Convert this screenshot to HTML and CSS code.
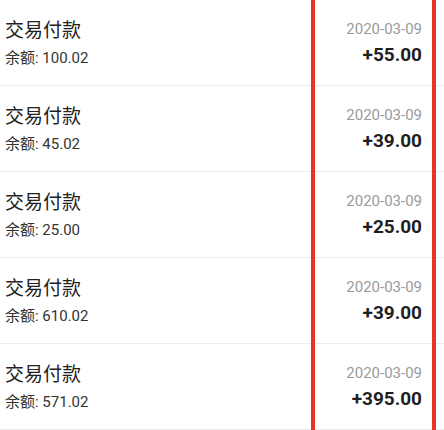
FILE: index.html
```html
<!DOCTYPE html>
<html lang="zh-CN">
<head>
<meta charset="utf-8">
<link rel="stylesheet" href="styles.css">
</head>
<body>
<div class="page">
  <ul class="list">
    <li class="row">
      <div class="info"><div class="title">交易付款</div><div class="balance">余额: 100.02</div></div>
      <div class="meta"><div class="date">2020-03-09</div><div class="amount">+55.00</div></div>
    </li>
    <li class="row">
      <div class="info"><div class="title">交易付款</div><div class="balance">余额: 45.02</div></div>
      <div class="meta"><div class="date">2020-03-09</div><div class="amount">+39.00</div></div>
    </li>
    <li class="row">
      <div class="info"><div class="title">交易付款</div><div class="balance">余额: 25.00</div></div>
      <div class="meta"><div class="date">2020-03-09</div><div class="amount">+25.00</div></div>
    </li>
    <li class="row">
      <div class="info"><div class="title">交易付款</div><div class="balance">余额: 610.02</div></div>
      <div class="meta"><div class="date">2020-03-09</div><div class="amount">+39.00</div></div>
    </li>
    <li class="row">
      <div class="info"><div class="title">交易付款</div><div class="balance">余额: 571.02</div></div>
      <div class="meta"><div class="date">2020-03-09</div><div class="amount">+395.00</div></div>
    </li>
  </ul>
  <div class="highlight"></div>
</div>
</body>
</html>
```
FILE: styles.css
```css
html, body {
  margin: 0;
  padding: 0;
  background: #ffffff;
}
body {
  font-family: "Roboto", "Noto Sans CJK SC", sans-serif;
  color: #222222;
}
.page {
  position: relative;
  width: 444px;
  height: 430px;
  overflow: hidden;
}
.list {
  list-style: none;
  margin: 0;
  padding: 0;
}
.row {
  display: flex;
  align-items: center;
  justify-content: space-between;
  height: 85px;
  padding: 0 22px 0 5px;
  border-bottom: 1px solid #ececec;
}
.info {
  display: flex;
  flex-direction: column;
  gap: 6px;
}
.title {
  font-size: 19px;
  line-height: 24px;
  color: #222222;
}
.balance {
  font-size: 15px;
  line-height: 18px;
  color: #333333;
}
.meta {
  display: flex;
  flex-direction: column;
  align-items: flex-end;
  gap: 6px;
}
.date {
  font-size: 15px;
  line-height: 18px;
  color: #9a9a9a;
}
.amount {
  font-size: 19px;
  line-height: 22px;
  font-weight: 700;
  color: #1f1f1f;
}
.highlight {
  position: absolute;
  top: -10px;
  bottom: -10px;
  left: 311px;
  width: 117px;
  border-left: 4px solid #e8332b;
  border-right: 4px solid #e8332b;
  pointer-events: none;
}
```
